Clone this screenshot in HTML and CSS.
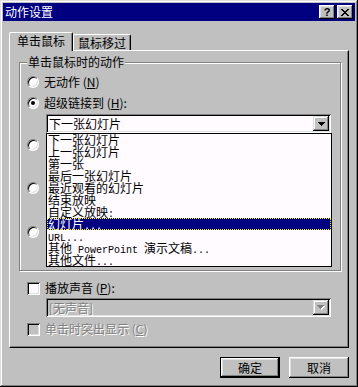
FILE: index.html
```html
<!DOCTYPE html>
<html lang="zh-CN">
<head>
    <meta charset="UTF-8">
    <title>动作设置</title>
    <link rel="stylesheet" href="styles.css">
</head>
<body>
    <div class="window">
        <div class="titlebar">
            <span class="title">动作设置</span>
            <div class="title-buttons">
                <div class="tbtn help">?</div>
                <div class="tbtn">
                    <svg width="8" height="7" viewBox="0 0 8 7" shape-rendering="crispEdges">
                        <path d="M0 0h2v1H0z M6 0h2v1H6z M1 1h2v1H1z M5 1h2v1H5z M2 2h4v1H2z M3 3h2v1H3z M2 4h4v1H2z M1 5h2v1H1z M5 5h2v1H5z M0 6h2v1H0z M6 6h2v1H6z" fill="#000"/>
                    </svg>
                </div>
            </div>
        </div>

        <div class="content">
            <div class="tabs">
                <div class="tab active">单击鼠标</div>
                <div class="tab">鼠标移过</div>
            </div>

            <div class="panel">
                <fieldset class="group">
                    <legend>单击鼠标时的动作</legend>

                    <div class="opt-row first">
                        <span class="radio"></span>
                        <span>无动作 (<u>N</u>)</span>
                    </div>
                    <div class="opt-row second">
                        <span class="radio checked"></span>
                        <span>超级链接到 (<u>H</u>):</span>
                    </div>

                    <div class="combo-wrap">
                        <div class="combo">
                            <span class="combo-text">下一张幻灯片</span>
                            <span class="drop-btn">
                                <svg width="7" height="4" viewBox="0 0 7 4" shape-rendering="crispEdges">
                                    <path d="M0 0h7v1H0z M1 1h5v1H1z M2 2h3v1H2z M3 3h1v1H3z" fill="#000"/>
                                </svg>
                            </span>
                        </div>
                        <!-- 打开的下拉列表 -->
                        <ul class="droplist">
                            <li>下一张幻灯片</li>
                            <li>上一张幻灯片</li>
                            <li>第一张</li>
                            <li>最后一张幻灯片</li>
                            <li>最近观看的幻灯片</li>
                            <li>结束放映</li>
                            <li>自定义放映<span class="mono">:</span></li>
                            <li class="selected">幻灯片<span class="mono">...</span></li>
                            <li><span class="mono">URL...</span></li>
                            <li>其他<span class="mono"> PowerPoint </span>演示文稿<span class="mono">...</span></li>
                            <li>其他文件<span class="mono">...</span></li>
                        </ul>
                    </div>

                    <!-- 以下选项的文字被下拉列表挡住 -->
                    <div class="opt-row third"><span class="radio"></span></div>
                    <div class="opt-row fourth"><span class="radio"></span></div>
                    <div class="opt-row fifth"><span class="radio"></span></div>
                </fieldset>

                <div class="check-row sound">
                    <span class="checkbox"></span>
                    <span>播放声音 (<u>P</u>):</span>
                </div>

                <div class="combo disabled sound-combo">
                    <span class="combo-text">[无声音]</span>
                    <span class="drop-btn">
                        <svg width="8" height="5" viewBox="0 0 8 5" shape-rendering="crispEdges">
                            <path d="M1 1h7v1H1z M2 2h5v1H2z M3 3h3v1H3z M4 4h1v1H4z" fill="#fff"/>
                            <path d="M0 0h7v1H0z M1 1h5v1H1z M2 2h3v1H2z M3 3h1v1H3z" fill="#808080"/>
                        </svg>
                    </span>
                </div>

                <div class="check-row highlight disabled">
                    <span class="checkbox"></span>
                    <span>单击时突出显示 (<u>C</u>)</span>
                </div>
            </div>

            <div class="buttons">
                <div class="btn default">确定</div>
                <div class="btn">取消</div>
            </div>
        </div>
    </div>
</body>
</html>
```

FILE: styles.css
```css
* {
    box-sizing: border-box;
}

body {
    margin: 0;
    background: #c0c0c0;
    font-family: "Noto Sans CJK SC", "Liberation Sans", sans-serif;
    font-size: 12px;
    line-height: 12px;
    color: #000;
}

u {
    text-decoration: underline;
}

.window {
    width: 358px;
    height: 387px;
    padding: 3px;
    background: #c0c0c0;
    box-shadow: inset -1px -1px #000, inset 1px 1px #dfdfdf, inset -2px -2px #808080, inset 2px 2px #fff;
}

/* 标题栏 */
.titlebar {
    height: 18px;
    background: #000080;
    color: #fff;
    display: flex;
    align-items: center;
    justify-content: space-between;
    padding: 0 2px;
}

.title {
    line-height: 12px;
}

.title-buttons {
    display: flex;
    gap: 2px;
}

.tbtn {
    width: 16px;
    height: 14px;
    background: #c0c0c0;
    display: flex;
    align-items: center;
    justify-content: center;
    box-shadow: inset -1px -1px #000, inset 1px 1px #fff, inset -2px -2px #808080, inset 2px 2px #dfdfdf;
}

.tbtn.help {
    color: #000;
    font-family: "Liberation Sans", sans-serif;
    font-weight: bold;
    font-size: 11px;
    line-height: 11px;
}

.content {
    padding: 11px 6px 0 6px;
}

/* 选项卡 */
.tabs {
    display: flex;
    align-items: flex-end;
    height: 18px;
}

.tab {
    width: 58px;
    height: 16px;
    border: 1px solid;
    border-color: #fff #000 transparent #fff;
    border-bottom: none;
    border-radius: 2px 2px 0 0;
    box-shadow: inset -1px 0 #808080;
    display: flex;
    align-items: center;
    justify-content: center;
    padding-top: 1px;
}

.tab.active {
    width: 64px;
    height: 19px;
    margin-bottom: -1px;
    position: relative;
    z-index: 1;
    background: #c0c0c0;
    padding-top: 0;
    padding-bottom: 2px;
}

.panel {
    height: 298px;
    border: 1px solid;
    border-color: #fff #000 #000 #fff;
    box-shadow: inset -1px -1px #808080;
    padding: 5px 0 0 9px;
}

/* 分组框 */
.group {
    width: 322px;
    margin: 0;
    padding: 6px 0 30px 7px;
    border: 1px solid #808080;
    box-shadow: 1px 1px 0 #fff, inset 1px 1px 0 #fff;
}

.group legend {
    padding: 0 1px;
    background: #c0c0c0;
    line-height: 12px;
}

.opt-row,
.check-row {
    display: flex;
    align-items: center;
    height: 16px;
}

.opt-row.second { margin-top: 5px; }
.opt-row.third { margin-top: 4px; }
.opt-row.fourth { margin-top: 27px; }
.opt-row.fifth { margin-top: 28px; }

.radio {
    width: 12px;
    height: 12px;
    margin-right: 5px;
    border-radius: 50%;
    background: #fffbff;
    border: 1px solid;
    border-color: #808080 #fff #fff #808080;
    box-shadow: inset 1px 1px #000, inset -1px -1px #dfdfdf;
    display: flex;
    align-items: center;
    justify-content: center;
    flex-shrink: 0;
}

.radio.checked::after {
    content: "";
    width: 4px;
    height: 4px;
    border-radius: 50%;
    background: #000;
}

.checkbox {
    width: 13px;
    height: 13px;
    margin-right: 5px;
    background: #fffbff;
    box-shadow: inset 1px 1px #808080, inset -1px -1px #fff, inset 2px 2px #000, inset -2px -2px #dfdfdf;
    flex-shrink: 0;
}

/* 组合框 */
.combo-wrap {
    position: relative;
    width: 285px;
    margin: 3px 0 0 19px;
}

.combo {
    width: 285px;
    height: 19px;
    padding: 2px 2px 2px 3px;
    display: flex;
    align-items: center;
    background: #fffbff;
    box-shadow: inset 1px 1px #808080, inset -1px -1px #fff, inset 2px 2px #000, inset -2px -2px #dfdfdf;
}

.drop-btn {
    margin-left: auto;
    width: 16px;
    height: 15px;
    background: #c0c0c0;
    display: flex;
    align-items: center;
    justify-content: center;
    box-shadow: inset -1px -1px #000, inset 1px 1px #dfdfdf, inset -2px -2px #808080, inset 2px 2px #fff;
}

.droplist {
    position: absolute;
    top: 100%;
    left: 0;
    z-index: 2;
    width: 286px;
    margin: 0;
    padding: 0;
    list-style: none;
    background: #fffbff;
    border: 1px solid #000;
}

.droplist li {
    height: 12px;
    line-height: 12px;
    padding-left: 1px;
    white-space: pre;
}

.droplist li.selected {
    background: #000080;
    color: #fff;
    outline: 1px dotted #ffff00;
    outline-offset: -1px;
}

.mono {
    font-family: "Liberation Mono", monospace;
    font-size: 10px;
}

.check-row.sound {
    margin: 9px 0 0 8px;
}

.sound-combo {
    margin: 2px 0 0 27px;
    width: 285px;
}

.combo.disabled {
    background: #c0c0c0;
}

.combo.disabled .combo-text,
.check-row.disabled {
    color: #808080;
    text-shadow: 1px 1px 0 #fff;
}

.check-row.highlight {
    margin: 4px 0 0 8px;
}

.check-row.disabled .checkbox {
    background: #c0c0c0;
}

/* 底部按钮 */
.buttons {
    display: flex;
    justify-content: flex-end;
    gap: 9px;
    margin-top: 9px;
}

.btn {
    width: 60px;
    height: 21px;
    display: flex;
    align-items: center;
    justify-content: center;
    box-shadow: inset -1px -1px #000, inset 1px 1px #fff, inset -2px -2px #808080, inset 2px 2px #dfdfdf;
}

.btn.default {
    border: 1px solid #000;
}
```
